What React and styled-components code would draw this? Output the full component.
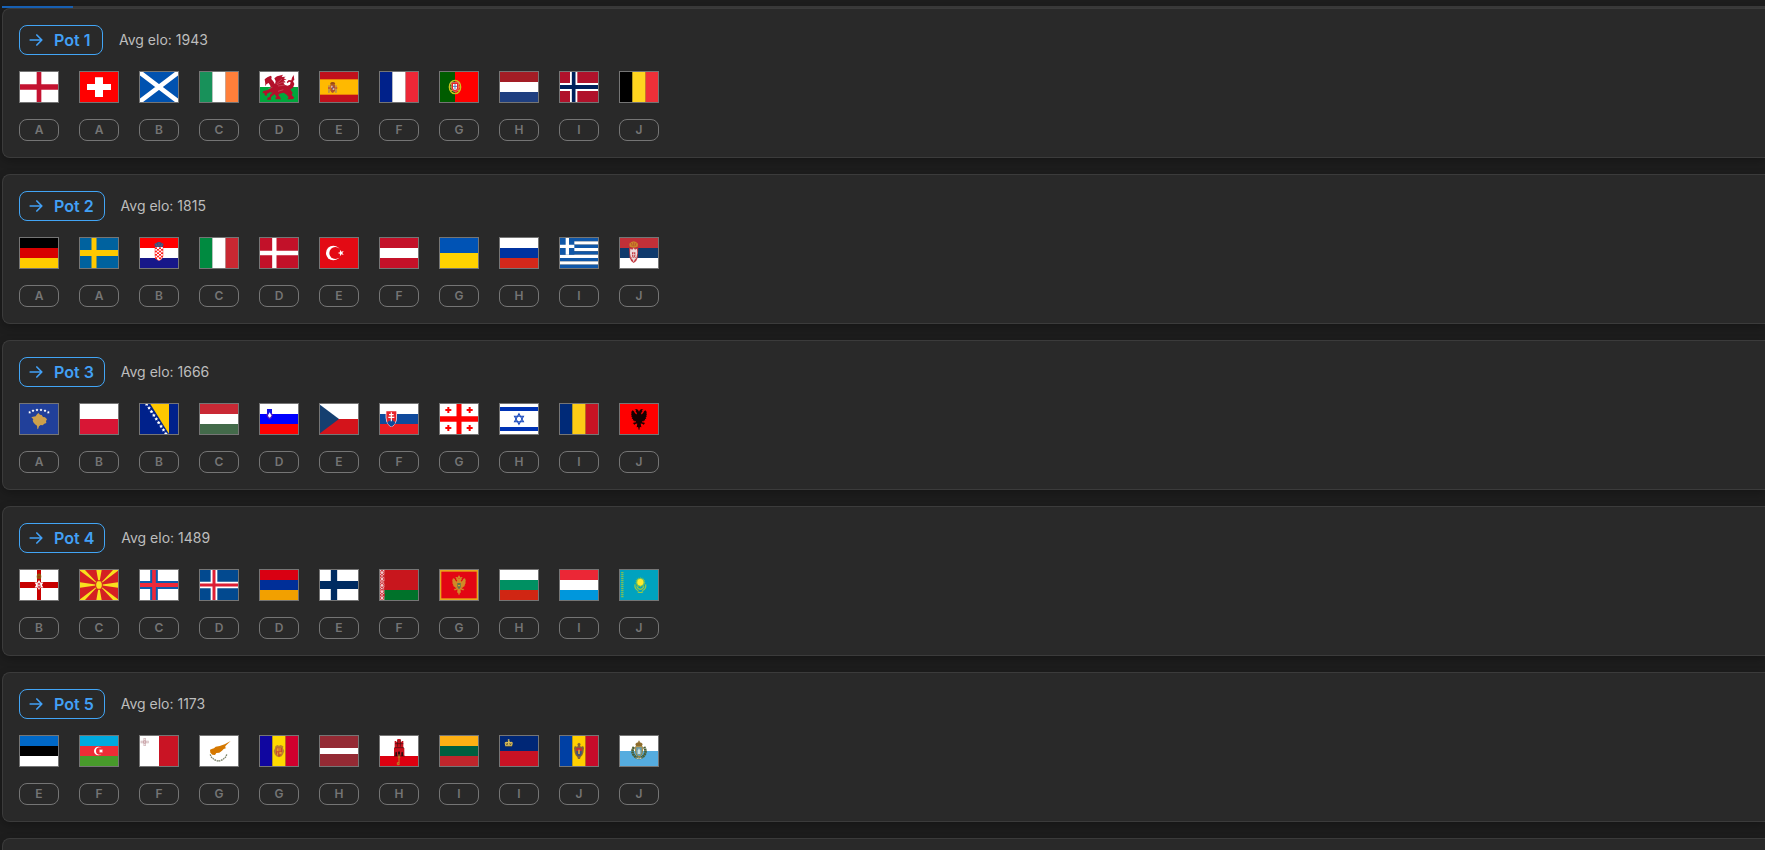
import React from "react";
import styled, { createGlobalStyle } from "styled-components";

const GlobalStyle = createGlobalStyle`
  * { box-sizing: border-box; }
  body {
    margin: 0;
    background: #1d1d1d;
    color: #bdbdbd;
    font-family: Inter, "Liberation Sans", sans-serif;
  }
`;

const Page = styled.main`
  height: 100vh;
  overflow: hidden;
  padding: 6px 0 0 2px;
`;

const Progress = styled.div`
  height: 2px;
  background: #3b3b3b;
`;

const ProgressFill = styled.div`
  height: 100%;
  background: #1864ba;
`;

const PotList = styled.div`
  display: flex;
  flex-direction: column;
  gap: 16px;
`;

const PotCard = styled.section`
  display: flex;
  flex-direction: column;
  gap: 16px;
  min-height: 150px;
  padding: 16px;
  background: #292929;
  border: 1px solid #3b3b3b;
  border-right: 0;
  border-radius: 8px 0 0 8px;
  box-shadow: 0 3px 8px rgba(0, 0, 0, 0.25);
`;

const PotHeader = styled.header`
  display: flex;
  align-items: center;
  gap: 16px;
`;

const PotButton = styled.button`
  display: flex;
  align-items: center;
  gap: 8px;
  min-width: 84px;
  height: 30px;
  padding: 0 10px 0 6px;
  background: transparent;
  border: 1px solid #42a5f5;
  border-radius: 8px;
  color: #42a0f5;
  font: 600 16px/20px Inter, "Liberation Sans", sans-serif;
  cursor: pointer;
`;

const AvgElo = styled.span`
  font-size: 14px;
  line-height: 20px;
`;

const TeamRow = styled.div`
  display: flex;
  gap: 20px;
`;

const Team = styled.div`
  display: flex;
  flex-direction: column;
  gap: 16px;
  width: 40px;
`;

const FlagFrame = styled.svg`
  display: block;
  width: 40px;
  height: 32px;
  border: 1px solid #757575;
`;

const GroupTag = styled.span`
  height: 22px;
  border: 1px solid #757575;
  border-radius: 8px;
  color: #757575;
  font-size: 12px;
  font-weight: 600;
  line-height: 20px;
  text-align: center;
`;

function ArrowIcon() {
  return (
    <svg width="20" height="20" viewBox="0 0 24 24" fill="none" stroke="currentColor" strokeWidth="2" strokeLinecap="round" strokeLinejoin="round" aria-hidden="true">
      <path d="M5 12h14M13 18l6-6M13 6l6 6" />
    </svg>
  );
}

/* Every flag is drawn on a 120 x 90 grid. */
const Field = ({ c }) => <rect width="120" height="90" fill={c} />;

const rows = (...colors) =>
  colors.map((c, i) => (
    <rect key={i} y={(90 / colors.length) * i} width="120" height={90 / colors.length} fill={c} />
  ));

const cols = (...colors) =>
  colors.map((c, i) => (
    <rect key={i} x={(120 / colors.length) * i} width={120 / colors.length} height="90" fill={c} />
  ));

const Cross = ({ c, x, y = 45, w, h = w }) => (
  <path fill={c} d={`M${x - w / 2} 0h${w}v90h${-w}zM0 ${y - h / 2}h120v${h}h-120z`} />
);

const Plus = ({ x, y, r, w, c }) => (
  <path d={`M${x - r} ${y}h${2 * r}M${x} ${y - r}v${2 * r}`} stroke={c} strokeWidth={w} />
);

const starPoints = (cx, cy, r, n = 5, inner = 0.4) =>
  Array.from({ length: n * 2 }, (_, i) => {
    const a = (Math.PI * i) / n - Math.PI / 2;
    const d = i % 2 ? r * inner : r;
    return `${cx + d * Math.cos(a)},${cy + d * Math.sin(a)}`;
  }).join(" ");

const Star = ({ x, y, r, n, inner, c = "#fff" }) => (
  <polygon points={starPoints(x, y, r, n, inner)} fill={c} />
);

/* One side of a two-headed eagle: head, body half, wing feathers, foot, tail. */
const EAGLE_HALF =
  "M0-20l3-6 5-2 5 3-5 1 2 3-4 5 1 4 5-4 2-5 4-3 4 3-1 2 2 3-2 2 2 3-2 2 1 4-3 1 2 4-4 1 1 4-4 0-1 3-4-1 1 4 5 0 3 3-4 1 1 3-6-3-4-1 1 7 1 4-4-1-2 3 0 3-2 3z";

const Eagle = ({ x, y, s = 1, c }) => (
  <g fill={c} transform={`translate(${x} ${y}) scale(${s})`}>
    <path d={EAGLE_HALF} />
    <path d={EAGLE_HALF} transform="scale(-1 1)" />
  </g>
);

const FLAGS = {
  England: <><Field c="#fff" /><Cross c="#c41230" x={60} w={14} h={16} /></>,
  Switzerland: <><Field c="#f00" /><path fill="#fff" d="M48 16h24v20h24v18H72v21H48V54H24V36h24z" /></>,
  Scotland: <><Field c="#0052b0" /><path d="M-2-2L122 92M122-2L-2 92" stroke="#fff" strokeWidth="14" /></>,
  Ireland: cols("#18915a", "#fff", "#ff7f3a"),
  Wales: (
    <>
      {rows("#fff", "#00a73c")}
      <path fill="#b3102a" d="M17 22l8-6 10-5 3 3-1 7 7 8 4 8 2-9-4-9 8-6 18-5-4 7 12-1-6 5 9 4-9 1 6 7-7 1 5 7 8 2 7-3 2-7-5-2-4 5-3-4 6-6 8 1 2-8 5-8 2 15-4 3 4 9-4 11-8 5 7 10-3 7 8 8-5 5H85l4-6-6-8-9-6-13 3-3 5 5 5 3 7H50l-1-5 4-2-6-8-7 4-5 7 2 5H24l2-6 6-2 2-8 7-5-8-1-10 5 1 6-7-2-1-7-6 1 3-7 13-3 9-5-1-8-5-8-6 3-5 7 1-7z" />
      <path d="M52 36l17-15M54 38l23-10M57 42l21-3M28 50l12-4M57 58l16-5" stroke="#e9a9ae" strokeWidth="1.5" opacity=".6" />
    </>
  ),
  Spain: (
    <>
      <Field c="#c1101c" /><rect y="22" width="120" height="46" fill="#ffb900" />
      <path d="M28 40h4v22h-5v-3h1zM49 40h4v22h-5v-3h1z" fill="#a9885e" />
      <path d="M34 38h14v17q-2 8-7 8t-7-8z" fill="#b0502f" /><path d="M33 36l3-5 5-1 5 1 3 5-3 2H36z" fill="#9c4a18" />
      <path d="M36 41h5v6h-5zM41 48h5v6h-5z" fill="#d9b7a4" /><circle cx="41" cy="48" r="2" fill="#5050a0" />
      <path d="M27 48h6M49 48h6" stroke="#c4262c" strokeWidth="3" />
    </>
  ),
  France: cols("#00218a", "#fff", "#ee2737"),
  Portugal: (
    <>
      <Field c="#f00" /><rect width="48" height="90" fill="#005c00" />
      <ellipse cx="48" cy="45" rx="17" ry="20" fill="none" stroke="#c9c61c" strokeWidth="4" />
      <path d="M33 33q14 18 30 25M62 32q-10 17-28 26M31 45h34" fill="none" stroke="#c9c61c" strokeWidth="3" />
      <path d="M37 31h22v17q-1 9-11 12-10-3-11-12z" fill="#e62626" stroke="#eee" strokeWidth="1" />
      <path d="M42 36h12v12q-1 5-6 7-5-2-6-7z" fill="#fff" /><path d="M48 36v17M42 43h12" stroke="#5877b8" strokeWidth="3" />
    </>
  ),
  Netherlands: rows("#a31d25", "#fff", "#1f3f80"),
  Norway: <><Field c="#b0122b" /><Cross c="#fff" x={44} w={22} h={24} /><Cross c="#00205b" x={44} w={11} h={12} /></>,
  Belgium: cols("#000", "#ffd51f", "#ee3039"),
  Germany: rows("#000", "#d80000", "#ffcc00"),
  Sweden: <><Field c="#00629f" /><Cross c="#ffc900" x={45} w={15} h={18} /></>,
  Croatia: (
    <>
      {rows("#f00", "#fff", "#171789")}
      <path d="M48 27h24v26q-1 11-12 15-11-4-12-15z" fill="#fff" />
      {[0, 1, 2, 3, 4, 5, 6].flatMap((r) =>
        [0, 1, 2, 3].filter((q) => (q + r) % 2 === 0).map((q) => (
          <rect key={`${r}${q}`} x={48 + q * 6} y={28 + r * 5} width="6" height="5" fill="#f22" />
        ))
      )}
      <path d="M48 28v25q1 11 12 15 11-4 12-15V28" fill="none" stroke="#f22" strokeWidth="1.5" />
      <path d="M49 27l-3-9 6-3 5-3h6l5 3 6 3-3 9z" fill="#34567f" />
      <path d="M50 17l5 8M60 14v10M70 17l-5 8" stroke="#a95363" strokeWidth="2" />
    </>
  ),
  Italy: cols("#008a40", "#fff", "#c92832"),
  Denmark: <><Field c="#c21129" /><Cross c="#fff" x={46} w={13} h={13} /></>,
  Turkey: (
    <>
      <Field c="#e30a14" /><circle cx="43" cy="45" r="22" fill="#fff" /><circle cx="49" cy="45" r="18" fill="#e30a14" />
      <g transform="rotate(-18 66 45)"><Star x={66} y={45} r={10} /></g>
    </>
  ),
  Austria: rows("#c41129", "#fff", "#c41129"),
  Ukraine: rows("#0053b5", "#ffd200"),
  Russia: rows("#fff", "#0033a0", "#d3281b"),
  Greece: (
    <>
      {rows("#0f57a8", "#fff", "#0f57a8", "#fff", "#0f57a8", "#fff", "#0f57a8", "#fff", "#0f57a8")}
      <rect width="46" height="50" fill="#0f57a8" /><path d="M25 0v50M0 25h46" stroke="#fff" strokeWidth="10" />
    </>
  ),
  Serbia: (
    <>
      {rows("#c13038", "#0f3a6c", "#fff")}
      <path d="M30 31q14-6 28 0l-2 28q-3 12-12 16-9-4-12-16z" fill="#c43a42" />
      <path d="M44 30l4 5 6-3 1 14-3 15-5 4-3 8-3-8-5-4-3-15 1-14 6 3z" fill="#ecd9db" />
      <path d="M39 43h10v10q-1 5-5 7-4-2-5-7z" fill="#c43a42" /><path d="M44 43v15M39 50h10" stroke="#f4e8e8" strokeWidth="2" />
      <path d="M36 62l4-6M52 62l-4-6" stroke="#b84a50" strokeWidth="2" />
      <path d="M32 26l-1-9 6-5 7-2 7 2 6 5-1 9-12 3z" fill="#c98529" /><path d="M37 15l3 9M51 15l-3 9M44 13v12" stroke="#b8402c" strokeWidth="2" />
    </>
  ),
  Kosovo: (
    <>
      <Field c="#21409a" />
      <path d="M58 27l5 5 5 1 4 6 6 1 6 6-3 5 1 6-6 2-5 5-6-1-5 4-3 9-2-2-1-9-6-4-5-6-2-7 2-2-6-6 5-2 8-1 4-6z" fill="#cda04b" />
      {[[32, 25], [42, 20], [54, 18], [66, 18], [78, 20], [88, 25]].map(([x, y]) => <Star key={x} x={x} y={y} r={4.5} inner={0.55} />)}
    </>
  ),
  Poland: rows("#fff", "#d81635"),
  Bosnia: (
    <>
      <Field c="#00218b" /><path d="M34 0h56v90z" fill="#ffc800" />
      {[0, 1, 2, 3, 4, 5, 6, 7, 8].map((i) => <Star key={i} x={23 + i * 7.2} y={1 + i * 11} r={6} inner={0.5} />)}
    </>
  ),
  Hungary: rows("#c92935", "#fff", "#436a4a"),
  Slovenia: (
    <>
      {rows("#fff", "#00f", "#f00")}
      <path d="M24 15h15v17q-1 9-7 13-7-4-8-13z" fill="#1010e6" /><path d="M24 28v6q2 7 8 11 6-4 7-11v-6" fill="none" stroke="#e03060" strokeWidth="1.5" />
      <path d="M27 34l2-4 3-5 3 5 2 4-2 5-3 2-3-2z" fill="#fff" />
    </>
  ),
  Czechia: <>{rows("#fff", "#d4141b")}<path d="M0 0l60 45L0 90z" fill="#153f70" /></>,
  Slovakia: (
    <>
      {rows("#fff", "#0f4a9c", "#eb1c24")}
      <path d="M20 20h34v21q-1 20-17 28-16-8-17-28z" fill="#fff" /><path d="M22 22h30v19q-1 18-15 26-14-8-15-26z" fill="#e8242c" />
      <path d="M25 56q2-5 6-4 2-6 6-6t6 6q4-1 6 4-4 8-12 12-8-4-12-12z" fill="#0f4a9c" />
      <path d="M37 25v27M30 32h14M28 40h18" stroke="#fff" strokeWidth="3.5" />
    </>
  ),
  Georgia: (
    <>
      <Field c="#fff" /><Cross c="#f00" x={60} w={15} h={17} />
      {[[28, 18], [92, 18], [28, 72], [92, 72]].map(([x, y]) => <Plus key={`${x}${y}`} x={x} y={y} r={9} w={6} c="#f00" />)}
    </>
  ),
  Israel: (
    <>
      <Field c="#fff" /><path d="M0 9h120v12H0zM0 69h120v12H0z" fill="#0033b4" />
      <path d="M60 29l13.5 24h-27zM60 61l13.5-24h-27z" fill="none" stroke="#1446bc" strokeWidth="3.2" />
    </>
  ),
  Romania: cols("#002a78", "#fdcc16", "#c81424"),
  Albania: <><Field c="#f00" /><Eagle x={60} y={44} s={1.04} c="#180000" /></>,
  "Northern Ireland": (
    <>
      <Field c="#fff" /><Cross c="#c70000" x={60} w={12} h={18} /><Star x={60} y={45} r={15} n={6} inner={0.58} />
      <path d="M56 39v11l3 5h4l2-6-2-11z" fill="#d6505a" /><path d="M57 44l3 4 3-4" stroke="#fff" fill="none" strokeWidth="2" />
      <path d="M54 26l-1-8 2-5 5-3 5 3 2 5-1 8z" fill="#8d5a0c" /><path d="M56 20h8" stroke="#a83008" strokeWidth="3" />
    </>
  ),
  "North Macedonia": (
    <>
      <Field c="#d42023" />
      <path d="M52 0h16l-8 45zM52 90h16l-8-45zM0 36v18l60-9zM120 36v18l-60-9zM0 0h18l42 45zM120 0h-18L60 45zM0 90h18l42-45zM120 90h-18L60 45z" fill="#f9e01e" />
      <ellipse cx="60" cy="45" rx="10" ry="13" fill="#f9e01e" stroke="#d42023" strokeWidth="3" />
    </>
  ),
  "Faroe Islands": <><Field c="#fff" /><Cross c="#0b5cad" x={45} w={23} h={24} /><Cross c="#ed2939" x={45} w={11} h={12} /></>,
  Iceland: <><Field c="#02498f" /><Cross c="#fff" x={45} w={20} h={20} /><Cross c="#dc1e35" x={45} w={9} h={9} /></>,
  Armenia: rows("#d90012", "#002f98", "#f2a000"),
  Finland: <><Field c="#fff" /><Cross c="#002b61" x={45} w={19} h={24} /></>,
  Belarus: (
    <>
      <Field c="#c8161d" /><rect y="60" width="120" height="30" fill="#00722a" /><rect width="16" height="90" fill="#f1c9cd" />
      {[0, 1, 2, 3, 4].map((i) => <path key={i} d={`M9 ${i * 19}l6 8-6 8-6-8zM1 ${i * 19 + 14}l5 4-5 4zM16 ${i * 19 + 14}l-4 4 4 4z`} fill="none" stroke="#c8161d" strokeWidth="2.5" />)}
    </>
  ),
  Montenegro: (
    <>
      <Field c="#e8a61c" /><rect x="7" y="5" width="106" height="80" fill="#e30613" /><Eagle x={60} y={46} s={0.9} c="#d08a26" />
      <path d="M55 39h10v11q-1 5-5 7-4-2-5-7z" fill="#5d7651" /><path d="M57 45h6v4h-6z" fill="#d9a41e" /><path d="M57 20l3-5 3 5v5h-6zM57 64h6l-3 10z" fill="#d08a26" />
    </>
  ),
  Bulgaria: rows("#fff", "#009062", "#d02613"),
  Luxembourg: rows("#eb2736", "#fff", "#0097dc"),
  Kazakhstan: (
    <>
      <Field c="#00a2bf" /><path d="M10 6v78" stroke="#7fbf56" strokeWidth="7" strokeDasharray="4 2" />
      <Star x={64} y={37} r={16} n={16} inner={0.72} c="#7fc54e" /><ellipse cx="64" cy="37" rx="9" ry="10" fill="#ffec2d" />
      <path d="M48 43q-2 14 10 19M80 43q2 14-10 19M53 49q4 9 11 9t11-9M56 65q8 5 16 0" fill="none" stroke="#9acb40" strokeWidth="3.5" />
    </>
  ),
  Estonia: rows("#0068c6", "#000", "#fff"),
  Azerbaijan: (
    <>
      {rows("#00aadf", "#ee2c36", "#489a2b")}
      <circle cx="58" cy="45" r="13" fill="#fff" /><circle cx="62" cy="45" r="11" fill="#ee2c36" /><Star x={66} y={45} r={7} n={8} inner={0.5} />
    </>
  ),
  Malta: (
    <>
      <Field c="#fff" /><rect x="60" width="60" height="90" fill="#c91424" />
      <Plus x={17} y={18} r={12} w={7} c="#cfb4b8" /><Plus x={17} y={18} r={10} w={3} c="#f4ecec" /><circle cx="17" cy="18" r="5" fill="#c79da3" /><circle cx="17" cy="18" r="2" fill="#f4ecec" />
    </>
  ),
  Cyprus: (
    <>
      <Field c="#fff" /><path d="M33 41l7-3 5-1 5-5 12-2 15-5 18-10-15 14-2 5 4 2-8 3-5 5-8 6-9 1-4 6-8-1-6-6z" fill="#d57800" />
      <path d="M34 55q3 15 24 20M83 55q-3 15-24 20" fill="none" stroke="#7d846a" strokeWidth="4" strokeDasharray="5 2" />
    </>
  ),
  Andorra: (
    <>
      {cols("#10069f", "#ffd900", "#d0002e")}
      <path d="M49 31l6-4 5 2 5-2 8 4-1 6 4 8-4 10-4 6-8 3-8-3-5-6-3-10 4-8z" fill="#bb812d" />
      <path d="M51 35h18v17q-1 6-9 10-8-4-9-10z" fill="#c94b29" /><path d="M53 37h6v9h-6zM61 48h7v7h-7z" fill="#e6a424" /><path d="M63 36v10M56 49v9" stroke="#f3cf3a" strokeWidth="2" />
    </>
  ),
  Latvia: <><Field c="#942a34" /><rect y="36" width="120" height="18" fill="#fff" /></>,
  Gibraltar: (
    <>
      <Field c="#fff" /><rect y="60" width="120" height="30" fill="#dc0010" />
      <path d="M45 60V36h2V15h5v3h3V9h10v9h3v-3h5v21h3v24z" fill="#c9101c" />
      <path d="M46 35h29M56 12v20M64 12v20M48 23h25M45 60h32" stroke="#3b1111" strokeWidth="2" /><path d="M49 60V50q3-5 5 0v10M57 60V48q4-5 6 0v12M67 60V50q3-5 5 0v10" fill="#2d0c0c" />
      <path d="M60 55v32M60 80h-5v6h5M56 63h8" stroke="#b88724" strokeWidth="3" fill="none" />
    </>
  ),
  Lithuania: rows("#fdb014", "#005f40", "#bf262c"),
  Liechtenstein: (
    <>
      {rows("#002776", "#c81224")}
      <path d="M19 31l-2-9q0-5 5-5l4 1 2-4h3l2 4 5-1q4 1 3 6l-2 8z" fill="#d6b957" /><path d="M29 9v8M26 12h6" stroke="#e9cf69" strokeWidth="2" />
      <path d="M21 22l3 5 2-6M32 21l2 6 3-5M20 31h19" stroke="#4b4732" strokeWidth="2" fill="none" />
    </>
  ),
  Moldova: (
    <>
      {cols("#0040a4", "#ffcf00", "#c60b2a")}
      <path d="M60 20l5 4-2 7 6 1 3-3 3 7-2 14-3 8-5 5-2 6h-6l-2-6-5-5-3-8-2-14 3-7 3 3 6-1-2-7z" fill="#846238" />
      <path d="M52 36h16v9H52z" fill="#c52c36" /><path d="M52 45h16v8q-2 6-8 8-6-2-8-8z" fill="#3d517f" />
      <path d="M57 41h6v11l-3 3-3-3z" fill="#c7963a" />
    </>
  ),
  "San Marino": (
    <>
      {rows("#fff", "#55acdf")}
      <path d="M45 33q-9 14 0 25 6 8 15 8t15-8q9-11 0-25" fill="none" stroke="#4b5f35" strokeWidth="8" strokeDasharray="6 1" />
      <path d="M50 32h20v17q-1 9-10 14-9-5-10-14z" fill="#6a9cab" stroke="#a5832f" strokeWidth="3" /><path d="M56 54V42h2v-4h4v4h2v12z" fill="#c9dcdc" />
      <path d="M51 30l-2-6 4-4 5-1v-5h4v5l5 1 4 4-2 6z" fill="#8d6c2b" /><path d="M50 65h20l-4 3h-4l-2-1-2 1h-4z" fill="#e9e1ce" />
    </>
  ),
};

const POTS = [
  { elo: 1943, teams: [["England", "A"], ["Switzerland", "A"], ["Scotland", "B"], ["Ireland", "C"], ["Wales", "D"], ["Spain", "E"], ["France", "F"], ["Portugal", "G"], ["Netherlands", "H"], ["Norway", "I"], ["Belgium", "J"]] },
  { elo: 1815, teams: [["Germany", "A"], ["Sweden", "A"], ["Croatia", "B"], ["Italy", "C"], ["Denmark", "D"], ["Turkey", "E"], ["Austria", "F"], ["Ukraine", "G"], ["Russia", "H"], ["Greece", "I"], ["Serbia", "J"]] },
  { elo: 1666, teams: [["Kosovo", "A"], ["Poland", "B"], ["Bosnia", "B"], ["Hungary", "C"], ["Slovenia", "D"], ["Czechia", "E"], ["Slovakia", "F"], ["Georgia", "G"], ["Israel", "H"], ["Romania", "I"], ["Albania", "J"]] },
  { elo: 1489, teams: [["Northern Ireland", "B"], ["North Macedonia", "C"], ["Faroe Islands", "C"], ["Iceland", "D"], ["Armenia", "D"], ["Finland", "E"], ["Belarus", "F"], ["Montenegro", "G"], ["Bulgaria", "H"], ["Luxembourg", "I"], ["Kazakhstan", "J"]] },
  { elo: 1173, teams: [["Estonia", "E"], ["Azerbaijan", "F"], ["Malta", "F"], ["Cyprus", "G"], ["Andorra", "G"], ["Latvia", "H"], ["Gibraltar", "H"], ["Lithuania", "I"], ["Liechtenstein", "I"], ["Moldova", "J"], ["San Marino", "J"]] },
];

export default function App() {
  return (
    <Page>
      <GlobalStyle />
      <Progress>
        <ProgressFill style={{ width: "4%" }} />
      </Progress>
      <PotList>
        {POTS.map((pot, i) => (
          <PotCard key={pot.elo}>
            <PotHeader>
              <PotButton type="button">
                <ArrowIcon />
                Pot {i + 1}
              </PotButton>
              <AvgElo>Avg elo: {pot.elo}</AvgElo>
            </PotHeader>
            <TeamRow>
              {pot.teams.map(([name, group]) => (
                <Team key={name}>
                  <FlagFrame viewBox="0 0 120 90" preserveAspectRatio="xMidYMid slice" aria-hidden="true">
                    {FLAGS[name]}
                  </FlagFrame>
                  <GroupTag>{group}</GroupTag>
                </Team>
              ))}
            </TeamRow>
          </PotCard>
        ))}
        <PotCard />
      </PotList>
    </Page>
  );
}
